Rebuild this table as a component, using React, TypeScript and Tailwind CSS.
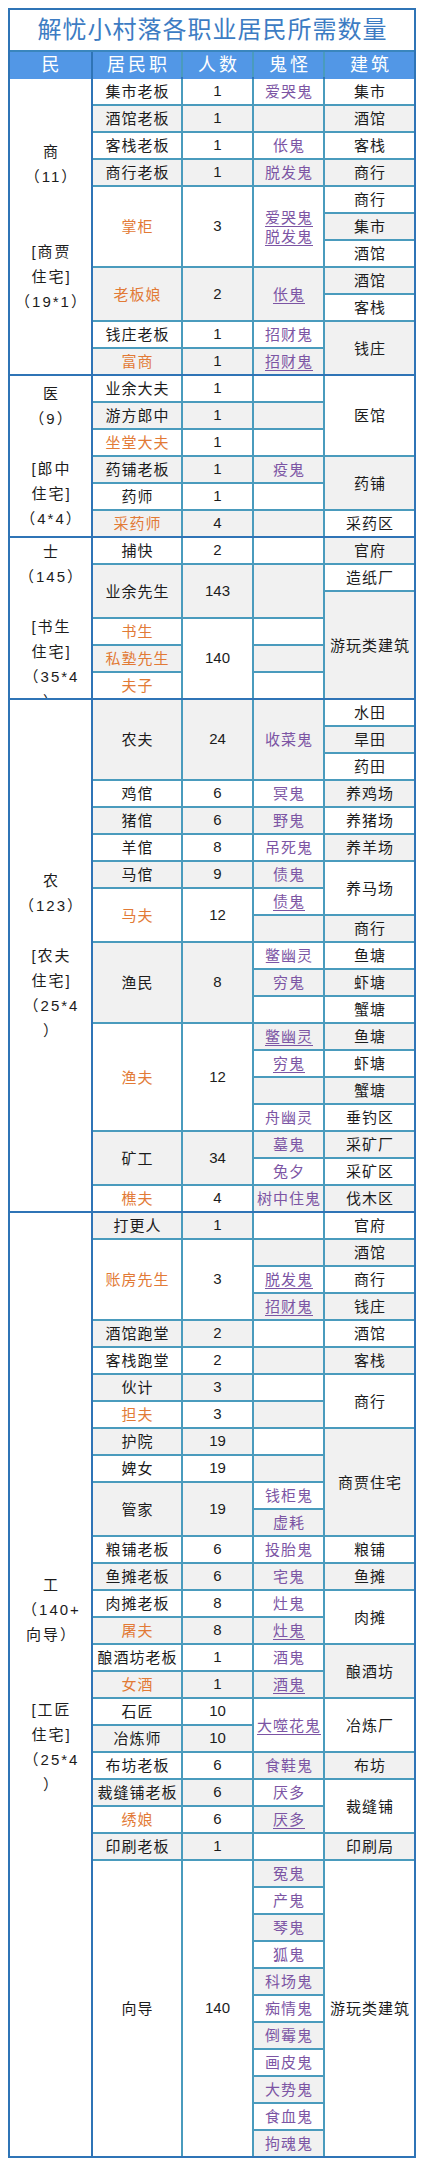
import React from "react";

type Cell = [number, number, string, string?];

type Section = {
  label: string[];
  top?: boolean;
  rows: Cell[];
};

const colStart = ["col-start-2", "col-start-3", "col-start-4", "col-start-5"];
const rowSpan: Record<number, string> = {
  1: "row-span-1",
  2: "row-span-2",
  3: "row-span-3",
  4: "row-span-4",
  6: "row-span-6",
  11: "row-span-11",
  19: "row-span-19",
  35: "row-span-35",
};

const sections: Section[] = [
  {
    label: ["商", "（11）", "", "", "[商贾", "住宅]", "（19*1）"],
    rows: [
      [0, 1, "集市老板"], [1, 1, "1"], [2, 1, "爱哭鬼", "p"], [3, 1, "集市"],
      [0, 1, "酒馆老板"], [1, 1, "1"], [2, 1, ""], [3, 1, "酒馆"],
      [0, 1, "客栈老板"], [1, 1, "1"], [2, 1, "伥鬼", "p"], [3, 1, "客栈"],
      [0, 1, "商行老板"], [1, 1, "1"], [2, 1, "脱发鬼", "p"], [3, 1, "商行"],
      [0, 3, "掌柜", "o"], [1, 3, "3"], [2, 3, "爱哭鬼\n脱发鬼", "u"], [3, 1, "商行"],
      [3, 1, "集市"],
      [3, 1, "酒馆"],
      [0, 2, "老板娘", "o"], [1, 2, "2"], [2, 2, "伥鬼", "u"], [3, 1, "酒馆"],
      [3, 1, "客栈"],
      [0, 1, "钱庄老板"], [1, 1, "1"], [2, 1, "招财鬼", "p"], [3, 2, "钱庄"],
      [0, 1, "富商", "o"], [1, 1, "1"], [2, 1, "招财鬼", "u"],
    ],
  },
  {
    label: ["医", "（9）", "", "[郎中", "住宅]", "（4*4）"],
    rows: [
      [0, 1, "业余大夫"], [1, 1, "1"], [2, 1, ""], [3, 3, "医馆"],
      [0, 1, "游方郎中"], [1, 1, "1"], [2, 1, ""],
      [0, 1, "坐堂大夫", "o"], [1, 1, "1"], [2, 1, ""],
      [0, 1, "药铺老板"], [1, 1, "1"], [2, 1, "疫鬼", "p"], [3, 2, "药铺"],
      [0, 1, "药师"], [1, 1, "1"], [2, 1, ""],
      [0, 1, "采药师", "o"], [1, 1, "4"], [2, 1, ""], [3, 1, "采药区"],
    ],
  },
  {
    label: ["士", "（145）", "", "[书生", "住宅]", "（35*4", "）"],
    top: true,
    rows: [
      [0, 1, "捕快"], [1, 1, "2"], [2, 1, ""], [3, 1, "官府"],
      [0, 2, "业余先生"], [1, 2, "143"], [2, 2, ""], [3, 1, "造纸厂"],
      [3, 4, "游玩类建筑"],
      [0, 1, "书生", "o"], [1, 3, "140"], [2, 1, ""],
      [0, 1, "私塾先生", "o"], [2, 1, ""],
      [0, 1, "夫子", "o"], [2, 1, ""],
    ],
  },
  {
    label: ["农", "（123）", "", "[农夫", "住宅]", "（25*4", "）"],
    rows: [
      [0, 3, "农夫"], [1, 3, "24"], [2, 3, "收菜鬼", "p"], [3, 1, "水田"],
      [3, 1, "旱田"],
      [3, 1, "药田"],
      [0, 1, "鸡倌"], [1, 1, "6"], [2, 1, "冥鬼", "p"], [3, 1, "养鸡场"],
      [0, 1, "猪倌"], [1, 1, "6"], [2, 1, "野鬼", "p"], [3, 1, "养猪场"],
      [0, 1, "羊倌"], [1, 1, "8"], [2, 1, "吊死鬼", "p"], [3, 1, "养羊场"],
      [0, 1, "马倌"], [1, 1, "9"], [2, 1, "债鬼", "p"], [3, 2, "养马场"],
      [0, 2, "马夫", "o"], [1, 2, "12"], [2, 1, "债鬼", "u"],
      [2, 1, ""], [3, 1, "商行"],
      [0, 3, "渔民"], [1, 3, "8"], [2, 1, "鳖幽灵", "p"], [3, 1, "鱼塘"],
      [2, 1, "穷鬼", "p"], [3, 1, "虾塘"],
      [2, 1, ""], [3, 1, "蟹塘"],
      [0, 4, "渔夫", "o"], [1, 4, "12"], [2, 1, "鳖幽灵", "u"], [3, 1, "鱼塘"],
      [2, 1, "穷鬼", "u"], [3, 1, "虾塘"],
      [2, 1, ""], [3, 1, "蟹塘"],
      [2, 1, "舟幽灵", "p"], [3, 1, "垂钓区"],
      [0, 2, "矿工"], [1, 2, "34"], [2, 1, "墓鬼", "p"], [3, 1, "采矿厂"],
      [2, 1, "兔夕", "p"], [3, 1, "采矿区"],
      [0, 1, "樵夫", "o"], [1, 1, "4"], [2, 1, "树中住鬼", "p"], [3, 1, "伐木区"],
    ],
  },
  {
    label: ["工", "（140+", "向导）", "", "", "[工匠", "住宅]", "（25*4", "）"],
    rows: [
      [0, 1, "打更人"], [1, 1, "1"], [2, 1, ""], [3, 1, "官府"],
      [0, 3, "账房先生", "o"], [1, 3, "3"], [2, 1, ""], [3, 1, "酒馆"],
      [2, 1, "脱发鬼", "u"], [3, 1, "商行"],
      [2, 1, "招财鬼", "u"], [3, 1, "钱庄"],
      [0, 1, "酒馆跑堂"], [1, 1, "2"], [2, 1, ""], [3, 1, "酒馆"],
      [0, 1, "客栈跑堂"], [1, 1, "2"], [2, 1, ""], [3, 1, "客栈"],
      [0, 1, "伙计"], [1, 1, "3"], [2, 1, ""], [3, 2, "商行"],
      [0, 1, "担夫", "o"], [1, 1, "3"], [2, 1, ""],
      [0, 1, "护院"], [1, 1, "19"], [2, 1, ""], [3, 4, "商贾住宅"],
      [0, 1, "婢女"], [1, 1, "19"], [2, 1, ""],
      [0, 2, "管家"], [1, 2, "19"], [2, 1, "钱柜鬼", "p"],
      [2, 1, "虚耗", "p"],
      [0, 1, "粮铺老板"], [1, 1, "6"], [2, 1, "投胎鬼", "p"], [3, 1, "粮铺"],
      [0, 1, "鱼摊老板"], [1, 1, "6"], [2, 1, "宅鬼", "p"], [3, 1, "鱼摊"],
      [0, 1, "肉摊老板"], [1, 1, "8"], [2, 1, "灶鬼", "p"], [3, 2, "肉摊"],
      [0, 1, "屠夫", "o"], [1, 1, "8"], [2, 1, "灶鬼", "u"],
      [0, 1, "酿酒坊老板"], [1, 1, "1"], [2, 1, "酒鬼", "p"], [3, 2, "酿酒坊"],
      [0, 1, "女酒", "o"], [1, 1, "1"], [2, 1, "酒鬼", "u"],
      [0, 1, "石匠"], [1, 1, "10"], [2, 2, "大噬花鬼", "u"], [3, 2, "冶炼厂"],
      [0, 1, "冶炼师"], [1, 1, "10"],
      [0, 1, "布坊老板"], [1, 1, "6"], [2, 1, "食鞋鬼", "p"], [3, 1, "布坊"],
      [0, 1, "裁缝铺老板"], [1, 1, "6"], [2, 1, "厌多", "p"], [3, 2, "裁缝铺"],
      [0, 1, "绣娘", "o"], [1, 1, "6"], [2, 1, "厌多", "u"],
      [0, 1, "印刷老板"], [1, 1, "1"], [2, 1, ""], [3, 1, "印刷局"],
      [0, 11, "向导"], [1, 11, "140"], [2, 1, "冤鬼", "p"], [3, 11, "游玩类建筑"],
      [2, 1, "产鬼", "p"],
      [2, 1, "琴鬼", "p"],
      [2, 1, "狐鬼", "p"],
      [2, 1, "科场鬼", "p"],
      [2, 1, "痴情鬼", "p"],
      [2, 1, "倒霉鬼", "p"],
      [2, 1, "画皮鬼", "p"],
      [2, 1, "大势鬼", "p"],
      [2, 1, "食血鬼", "p"],
      [2, 1, "拘魂鬼", "p"],
    ],
  },
];

const rowCount = [11, 6, 6, 19, 35];

const tone: Record<string, string> = {
  n: "text-[#1c1c1c]",
  o: "text-[#e27a36]",
  p: "text-[#7c55a4]",
  u: "text-[#7c55a4] underline underline-offset-[3px]",
};

// alternate white / grey down each column, across the whole table
const counters = [0, 0, 0, 0];
const shaded = sections.map((s) =>
  s.rows.map((c) => {
    const g = counters[c[0]] % 2 === 1;
    counters[c[0]]++;
    return g;
  })
);

const GridCell = ({ cell, grey }: { cell: Cell; grey: boolean }) => {
  const [col, span, text, kind = "n"] = cell;
  const isNum = col === 1;
  return (
    <div
      className={`${colStart[col]} ${rowSpan[span]} ${grey ? "bg-[#f1f1f1]" : "bg-white"} flex items-center justify-center text-center whitespace-pre-line ${
        isNum ? "text-[15px]" : "text-[15px] tracking-[1px] pl-[1px] leading-[19px]"
      } ${tone[kind]}`}
    >
      {text}
    </div>
  );
};

export default function App() {
  return (
    <div className="w-[424px] min-h-[2167px] bg-white pt-[8px] pl-[8px] font-['Liberation_Sans','Noto_Sans_CJK_SC',sans-serif]">
      <div className="w-[408px] border-2 border-[#2f74b6] bg-white">
        <div className="h-[42px] flex items-center justify-center border-b-2 border-[#3a86bd] text-[24px] tracking-[1px] pl-[1px] text-[#3d7cc3]">
          解忧小村落各职业居民所需数量
        </div>
        <div className="grid grid-cols-[81px_88px_69px_69px_89px] h-[25px] gap-x-[2px] bg-[#4a9bbd] text-white text-[18px]">
          <div className="flex items-center justify-center bg-[#5297e6] mr-[-2px] border-r-2 border-[#2f74b6]">民</div>
          <div className="flex items-center justify-center bg-[#5297e6] tracking-[3px] pl-[3px]">居民职</div>
          <div className="flex items-center justify-center bg-[#5297e6] tracking-[3px] pl-[3px]">人数</div>
          <div className="flex items-center justify-center bg-[#5297e6] tracking-[3px] pl-[3px]">鬼怪</div>
          <div className="flex items-center justify-center bg-[#5297e6] tracking-[3px] pl-[3px]">建筑</div>
        </div>
        {sections.map((s, si) => (
          <div
            key={si}
            className="grid grid-cols-[81px_88px_69px_69px_89px] auto-rows-[25px] gap-[2px] bg-[#4a9bbd] border-t-2 border-[#2f74b6]"
          >
            <div
              className={`col-start-1 row-start-1 ${rowSpan[rowCount[si]]} mr-[-2px] bg-white flex flex-col items-center overflow-hidden border-r-2 border-[#2f74b6] text-[15px] leading-[25px] tracking-[2px] pl-[2px] text-[#1c1c1c] ${
                s.top ? "justify-start pt-[1px]" : "justify-center"
              }`}
            >
              {s.label.map((l, i) => (
                <div key={i} className="h-[25px] shrink-0 whitespace-nowrap">
                  {l}
                </div>
              ))}
            </div>
            {s.rows.map((c, i) => (
              <GridCell key={i} cell={c} grey={shaded[si][i]} />
            ))}
          </div>
        ))}
      </div>
    </div>
  );
}
